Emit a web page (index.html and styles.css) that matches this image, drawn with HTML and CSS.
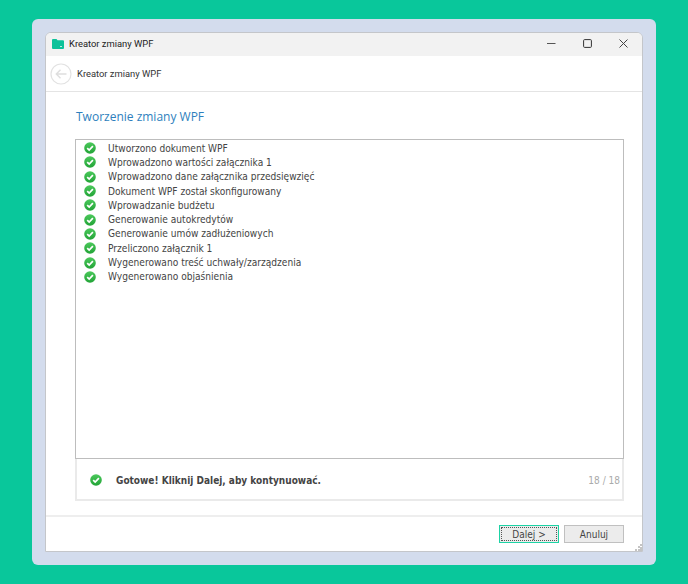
FILE: index.html
```html
<!DOCTYPE html>
<html lang="pl">
<head>
<meta charset="utf-8">
<title>Kreator zmiany WPF</title>
<link rel="stylesheet" href="styles.css">
</head>
<body>
<svg width="0" height="0" class="defs">
  <defs>
    <linearGradient id="okfill" x1="0" y1="0" x2="0" y2="1">
      <stop offset="0" stop-color="#4cc95c"/>
      <stop offset="1" stop-color="#21a336"/>
    </linearGradient>
  </defs>
  <symbol id="ok" viewBox="0 0 12 12">
    <circle cx="6" cy="6" r="5.8" fill="url(#okfill)"/>
    <path d="M3.2 6.1 5.2 8.1 8.9 4.2" fill="none" stroke="#fff" stroke-width="1.7"/>
  </symbol>
</svg>
<div class="panel">
  <div class="window">
    <div class="titlebar">
      <svg class="appicon" width="12" height="10" viewBox="0 0 12 10"><path d="M0 1a1 1 0 0 1 1-1h3.5l1 1.2H11a1 1 0 0 1 1 1V9a1 1 0 0 1-1 1H1a1 1 0 0 1-1-1z" fill="#0cc29a"/><path d="M8 7.5h2" stroke="#bdf0e2" stroke-width="1"/></svg>
      <span class="apptitle">Kreator zmiany WPF</span>
      <div class="winbtns">
        <svg width="9" height="9" viewBox="0 0 9 9"><path d="M0 4.5h8.5" stroke="#555" stroke-width="1"/></svg>
        <svg width="9" height="9" viewBox="0 0 9 9"><rect x="0.6" y="0.6" width="7.8" height="7.8" rx="1" fill="none" stroke="#333" stroke-width="1"/></svg>
        <svg width="9" height="9" viewBox="0 0 9 9"><path d="M.5.5l8 8M8.5.5l-8 8" stroke="#444" stroke-width="1"/></svg>
      </div>
    </div>
    <div class="navbar">
      <svg width="22" height="22" viewBox="0 0 22 22"><circle cx="11" cy="11" r="10" fill="#fff" stroke="#e2e2e2" stroke-width="1.2"/><path d="M16.5 11H6.5M10.5 6.8 6.3 11l4.2 4.2" fill="none" stroke="#dedede" stroke-width="1.4"/></svg>
      <span class="navtitle">Kreator zmiany WPF</span>
    </div>
    <div class="content">
      <h1 class="heading">Tworzenie zmiany WPF</h1>
      <div class="log">
        <div class="row"><svg class="ok"><use href="#ok"/></svg><span>Utworzono dokument WPF</span></div>
        <div class="row"><svg class="ok"><use href="#ok"/></svg><span>Wprowadzono wartości załącznika 1</span></div>
        <div class="row"><svg class="ok"><use href="#ok"/></svg><span>Wprowadzono dane załącznika przedsięwzięć</span></div>
        <div class="row"><svg class="ok"><use href="#ok"/></svg><span>Dokument WPF został skonfigurowany</span></div>
        <div class="row"><svg class="ok"><use href="#ok"/></svg><span>Wprowadzanie budżetu</span></div>
        <div class="row"><svg class="ok"><use href="#ok"/></svg><span>Generowanie autokredytów</span></div>
        <div class="row"><svg class="ok"><use href="#ok"/></svg><span>Generowanie umów zadłużeniowych</span></div>
        <div class="row"><svg class="ok"><use href="#ok"/></svg><span>Przeliczono załącznik 1</span></div>
        <div class="row"><svg class="ok"><use href="#ok"/></svg><span>Wygenerowano treść uchwały/zarządzenia</span></div>
        <div class="row"><svg class="ok"><use href="#ok"/></svg><span>Wygenerowano objaśnienia</span></div>
      </div>
      <div class="status">
        <svg class="ok"><use href="#ok"/></svg>
        <span class="statustext">Gotowe! Kliknij Dalej, aby kontynuować.</span>
        <span class="counter">18 / 18</span>
      </div>
    </div>
    <div class="footer">
      <button class="btn btn-primary" type="button"><span class="focus">Dalej &gt;</span></button>
      <button class="btn" type="button">Anuluj</button>
    </div>
    <svg class="grip" width="7" height="7" viewBox="0 0 7 7"><path d="M5 0h2v2H5zM3 2h2v2H3zM5 3h2v2H5zM0 5h2v2H0zM3 5h2v2H3zM5 5h2v2H5z" fill="#c4c4c4"/></svg>
  </div>
</div>
</body>
</html>
```
FILE: styles.css
```css
* { box-sizing: border-box; }
html, body { margin: 0; height: 100%; }
body {
  background: #09c79b;
  padding: 19px 32px;
  font-family: "DejaVu Sans Condensed", "DejaVu Sans", sans-serif;
  font-stretch: condensed;
  color: #444;
  overflow: hidden;
}
.defs { position: absolute; }
.panel {
  width: 624px;
  height: 546px;
  background: #d3dced;
  border-radius: 6px;
  padding: 13px;
}
.window {
  position: relative;
  width: 598px;
  height: 520px;
  background: #fff;
  border: 1px solid #c4c6ca;
  border-top-left-radius: 6px;
  border-top-right-radius: 6px;
  overflow: hidden;
}
.titlebar {
  height: 23px;
  background: #f2f2f2;
  display: flex;
  align-items: center;
  padding: 0 0 2px 6px;
}
.appicon { margin-right: 5px; }
.apptitle { font: 9.4px Roboto, sans-serif; color: #222; }
.winbtns {
  margin-left: auto;
  display: flex;
  gap: 27px;
  padding-right: 14px;
}
.navbar {
  height: 36px;
  border-bottom: 1px solid #e4e4e4;
  display: flex;
  align-items: center;
  padding-left: 4px;
  gap: 5px;
}
.navtitle { font: 9.4px Roboto, sans-serif; color: #333; }
.content { padding: 0 18px 0 29px; height: 424px; }
.heading {
  margin: 0;
  padding: 16px 0 0 1px;
  height: 47px;
  font: 400 12px "Open Sans", sans-serif;
  color: #2e7fbd;
}
.log {
  height: 320px;
  border: 1px solid #bdbdbd;
  padding-top: 1px;
}
.row {
  height: 14.3px;
  display: flex;
  align-items: center;
  padding-left: 8px;
  font-size: 10.1px;
}
.ok { width: 12px; height: 12px; flex: none; }
.row .ok { margin-right: 12px; }
.status {
  height: 42px;
  border: 2px solid #eaeaea;
  border-top: 0;
  display: flex;
  align-items: center;
  padding: 2px 2px 0 13px;
  font-size: 10px;
}
.status .ok { margin-right: 14px; }
.statustext { font-weight: 700; color: #444; }
.counter { margin-left: auto; color: #aaa; }
.footer {
  position: absolute;
  left: 0;
  right: 0;
  bottom: 0;
  height: 36px;
  border-top: 2px solid #eee;
  display: flex;
  justify-content: flex-end;
  gap: 5px;
  padding: 8px 18px 0 0;
}
.btn {
  width: 60px;
  height: 18px;
  padding: 0;
  border: 1px solid #c0c0c0;
  background: #ececec;
  font: condensed 10px "DejaVu Sans", sans-serif;
  color: #444;
}
.btn-primary { border: 1px solid #1dd3a5; padding: 1px; }
.focus {
  display: block;
  height: 100%;
  line-height: 13px;
  border: 1px dotted #555;
}
.grip { position: absolute; right: 0; bottom: 0; }
```
